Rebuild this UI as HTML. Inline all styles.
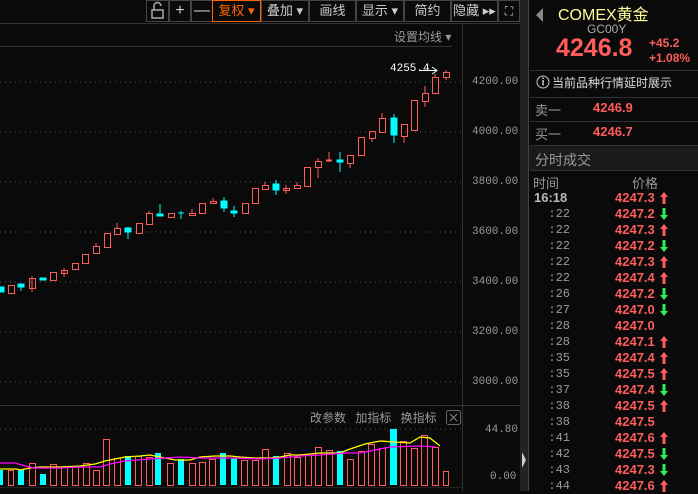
<!DOCTYPE html>
<html><head><meta charset="utf-8"><style>
*{margin:0;padding:0;box-sizing:border-box}
body{width:698px;height:491px;background:#0a0a0a;overflow:hidden;position:relative;font-family:"Liberation Sans","Noto Sans CJK SC",sans-serif;color:#ccc}
.a{position:absolute;white-space:nowrap}
.tb{position:absolute;top:0;height:22px;border:1px solid #444;font-size:13px;color:#ccc;text-align:center;line-height:20px}
.r{position:absolute;left:528px;width:170px;height:16px;font-size:12px;line-height:16px}
.t{position:absolute;right:128px;color:#999;font-family:"Liberation Mono",monospace;font-size:12px}
.p{position:absolute;left:87px;color:#ff5c5c;font-weight:bold;font-size:13px;font-family:"Liberation Sans",sans-serif}
.ar{position:absolute;left:132px;top:2px}
</style></head><body>
<svg class="a" style="left:0;top:0" width="698" height="491">
<line x1="0" y1="23.5" x2="520" y2="23.5" stroke="#333"/>
<line x1="0" y1="46.5" x2="452" y2="46.5" stroke="#333"/>
<line x1="462.5" y1="24" x2="462.5" y2="491" stroke="#333"/>
<line x1="0" y1="405.5" x2="520" y2="405.5" stroke="#333"/>
<line x1="0" y1="487.5" x2="462" y2="487.5" stroke="#222"/>
<rect x="520" y="0" width="8" height="491" fill="#222"/>
<line x1="528.5" y1="0" x2="528.5" y2="491" stroke="#444"/>
<polygon points="522,452 526,460 522,468" fill="#ccc"/>
<g stroke="#555" stroke-dasharray="1,4">
<line x1="0" y1="82" x2="462" y2="82"/><line x1="0" y1="132" x2="462" y2="132"/><line x1="0" y1="182" x2="462" y2="182"/><line x1="0" y1="232" x2="462" y2="232"/><line x1="0" y1="282" x2="462" y2="282"/><line x1="0" y1="332" x2="462" y2="332"/><line x1="0" y1="382" x2="462" y2="382"/><line x1="0" y1="429" x2="462" y2="429"/></g>
<g fill="#00ffff" stroke="#00ffff" stroke-width="1">
<rect x="-1" y="287" width="5" height="5"/>
<rect x="18" y="284" width="6" height="3"/><line x1="21" y1="284" x2="21" y2="291"/>
<rect x="40" y="278" width="6" height="2"/>
<rect x="125" y="228" width="6" height="4"/><line x1="128" y1="227" x2="128" y2="239"/>
<rect x="157" y="214" width="6" height="2"/><line x1="160" y1="204" x2="160" y2="216"/>
<line x1="178" y1="213" x2="184" y2="213"/><line x1="181" y1="211" x2="181" y2="219"/>
<rect x="221" y="201" width="6" height="7"/><line x1="224" y1="197" x2="224" y2="212"/>
<rect x="231" y="211" width="6" height="2"/><line x1="234" y1="206" x2="234" y2="217"/>
<rect x="273" y="184" width="6" height="6"/><line x1="276" y1="180" x2="276" y2="195"/>
<rect x="337" y="160" width="6" height="2"/><line x1="340" y1="152" x2="340" y2="172"/>
<rect x="391" y="118" width="6" height="17"/><line x1="394" y1="114" x2="394" y2="143"/>
</g>
<g fill="none" stroke="#ff5c5c" stroke-width="1">
<rect x="8.5" y="285.5" width="6" height="8"/>
<rect x="29.5" y="278.5" width="6" height="10"/><line x1="32" y1="276" x2="32" y2="292"/>
<rect x="50.5" y="272.5" width="6" height="8"/>
<rect x="61.5" y="270.5" width="6" height="3"/><line x1="64" y1="268" x2="64" y2="277"/>
<rect x="72.5" y="263.5" width="6" height="6"/>
<rect x="82.5" y="254.5" width="6" height="9"/>
<rect x="93.5" y="246.5" width="6" height="7"/><line x1="96" y1="243" x2="96" y2="246"/>
<rect x="104.5" y="233.5" width="6" height="14"/>
<rect x="114.5" y="228.5" width="6" height="6"/><line x1="117" y1="223" x2="117" y2="228"/>
<rect x="136.5" y="223.5" width="6" height="10"/>
<rect x="146.5" y="213.5" width="6" height="11"/><line x1="149" y1="211" x2="149" y2="213"/>
<rect x="168.5" y="213.5" width="6" height="4"/>
<rect x="189.5" y="213.5" width="6" height="2"/><line x1="192" y1="209" x2="192" y2="213"/>
<rect x="199.5" y="203.5" width="6" height="10"/>
<rect x="210.5" y="201.5" width="6" height="2"/><line x1="213" y1="198" x2="213" y2="201"/>
<rect x="242.5" y="203.5" width="6" height="10"/>
<rect x="252.5" y="188.5" width="6" height="15"/>
<rect x="262.5" y="185.5" width="6" height="4"/><line x1="265" y1="182" x2="265" y2="185"/>
<rect x="283.5" y="188.5" width="6" height="2"/><line x1="286" y1="185" x2="286" y2="194"/>
<rect x="294.5" y="185.5" width="6" height="3"/><line x1="297" y1="182" x2="297" y2="185"/>
<rect x="304.5" y="167.5" width="6" height="19"/>
<rect x="315.5" y="161.5" width="6" height="6"/><line x1="318" y1="158" x2="318" y2="161"/><line x1="318" y1="168" x2="318" y2="178"/>
<line x1="326" y1="160.5" x2="332" y2="160.5" stroke-width="2"/><line x1="329" y1="152" x2="329" y2="162"/>
<rect x="347.5" y="155.5" width="6" height="8"/><line x1="350" y1="163" x2="350" y2="168"/>
<rect x="358.5" y="137.5" width="6" height="18"/>
<rect x="369.5" y="131.5" width="6" height="7"/><line x1="372" y1="138" x2="372" y2="142"/>
<rect x="379.5" y="118.5" width="6" height="14"/><line x1="382" y1="113" x2="382" y2="118"/>
<rect x="401.5" y="124.5" width="6" height="12"/><line x1="404" y1="136" x2="404" y2="143"/>
<rect x="411.5" y="100.5" width="6" height="30"/>
<rect x="422.5" y="93.5" width="6" height="8"/><line x1="425" y1="86" x2="425" y2="93"/><line x1="425" y1="101" x2="425" y2="107"/>
<rect x="432.5" y="77.5" width="6" height="16"/><line x1="435" y1="74" x2="435" y2="77"/>
<rect x="443.5" y="72.5" width="6" height="5"/><line x1="446" y1="70" x2="446" y2="72"/><line x1="446" y1="78" x2="446" y2="80"/>
</g>
<line x1="419" y1="70.5" x2="437" y2="70.5" stroke="#fff"/><polyline points="432,67 437,70.5 432,74" fill="none" stroke="#fff"/>
<g fill="#00ffff">
<rect x="0" y="470" width="3" height="15"/><rect x="18" y="470" width="6" height="15"/><rect x="40" y="474" width="6" height="11"/><rect x="125" y="456" width="6" height="29"/><rect x="155" y="453" width="6" height="32"/><rect x="178" y="459" width="6" height="26"/><rect x="220" y="453" width="6" height="32"/><rect x="231" y="458" width="6" height="27"/><rect x="273" y="456" width="6" height="29"/><rect x="337" y="451" width="6" height="34"/><rect x="390" y="429" width="7" height="56"/>
</g>
<g fill="none" stroke="#ff5c5c">
<rect x="8.5" y="470.5" width="5" height="15"/><rect x="29.5" y="463.5" width="6" height="22"/><rect x="50.5" y="464.5" width="6" height="21"/><rect x="61.5" y="467.5" width="6" height="18"/><rect x="72.5" y="466.5" width="6" height="19"/><rect x="83.5" y="463.5" width="6" height="22"/><rect x="93.5" y="470.5" width="6" height="15"/><rect x="103.5" y="439.5" width="6" height="46"/><rect x="114.5" y="458.5" width="6" height="27"/><rect x="135.5" y="456.5" width="6" height="29"/><rect x="146.5" y="457.5" width="6" height="28"/><rect x="167.5" y="463.5" width="6" height="22"/><rect x="189.5" y="463.5" width="6" height="22"/><rect x="199.5" y="462.5" width="6" height="23"/><rect x="209.5" y="459.5" width="6" height="26"/><rect x="241.5" y="460.5" width="6" height="25"/><rect x="252.5" y="460.5" width="6" height="25"/><rect x="262.5" y="449.5" width="6" height="36"/><rect x="284.5" y="453.5" width="6" height="32"/><rect x="294.5" y="457.5" width="6" height="28"/><rect x="305.5" y="455.5" width="6" height="30"/><rect x="315.5" y="447.5" width="6" height="38"/><rect x="326.5" y="450.5" width="6" height="35"/><rect x="347.5" y="459.5" width="6" height="26"/><rect x="358.5" y="451.5" width="6" height="34"/><rect x="368.5" y="444.5" width="6" height="41"/><rect x="379.5" y="448.5" width="6" height="37"/><rect x="400.5" y="441.5" width="6" height="44"/><rect x="411.5" y="448.5" width="6" height="37"/><rect x="421.5" y="435.5" width="6" height="50"/><rect x="432.5" y="447.5" width="6" height="38"/><rect x="443.5" y="471.5" width="5" height="14"/>
</g>
<polyline fill="none" stroke="#ffff00" stroke-width="1.3" points="0,469 17,469 20,470 30,468 40,467 60,467 80,466 95,464 105,461 115,459 125,457 140,456 150,455 160,457 175,460 190,460 200,457 215,456 230,456 240,457 255,458 270,458 280,457 290,455 300,455 320,453 340,453 350,449 365,444 380,441 395,442 410,443 420,437 430,438 440,446"/>
<polyline fill="none" stroke="#ff00ff" stroke-width="1.3" points="0,463 15,463 25,466 35,468 60,468 80,467 100,467 110,464 125,461 150,459 165,458 180,457 200,458 230,458 260,459 280,458 300,456 320,455 345,453 360,453 390,447 420,446 436,447"/>
<rect x="446.5" y="410.5" width="14" height="14" fill="none" stroke="#666" rx="2"/>
<path d="M450 414 L457 421 M457 414 L450 421" stroke="#888"/>
<line x1="530" y1="70.5" x2="698" y2="70.5" stroke="#333"/>
<line x1="530" y1="97.5" x2="698" y2="97.5" stroke="#333"/>
<line x1="530" y1="121.5" x2="698" y2="121.5" stroke="#333"/>
<line x1="530" y1="145.5" x2="698" y2="145.5" stroke="#333"/>
<rect x="529" y="146" width="169" height="24" fill="#1a1a1a"/>
<line x1="530" y1="170.5" x2="698" y2="170.5" stroke="#333"/>
<polygon points="543,8 543,22 536,15" fill="#888"/>
<circle cx="543" cy="82" r="6" fill="none" stroke="#ccc"/>
<rect x="542.3" y="80" width="1.5" height="5.5" fill="#ccc"/><rect x="542.3" y="77.5" width="1.5" height="1.5" fill="#ccc"/>
</svg>
<div class="tb" style="left:146px;width:23px">
<svg width="21" height="20"><rect x="5" y="9" width="11" height="8" fill="none" stroke="#aaa" stroke-width="1.5"/><path d="M7 9 V5 a3.5 3.5 0 0 1 7 0" fill="none" stroke="#aaa" stroke-width="1.5"/></svg></div>
<div class="tb" style="left:169px;width:22px;font-size:16px">+</div>
<div class="tb" style="left:191px;width:22px;font-size:16px">—</div>
<div class="tb" style="left:212px;width:49px;border-color:#ff6600;color:#ff6600">复权 ▾</div>
<div class="tb" style="left:261px;width:48px">叠加 ▾</div>
<div class="tb" style="left:309px;width:47px">画线</div>
<div class="tb" style="left:356px;width:48px">显示 ▾</div>
<div class="tb" style="left:404px;width:47px">简约</div>
<div class="tb" style="left:451px;width:47px">隐藏 ▸▸</div>
<div class="tb" style="left:498px;width:22px;font-size:12px">⛶</div>
<div class="a" style="left:394px;top:28px;font-size:12px;color:#999">设置均线 ▾</div>
<div class="a" style="left:390px;top:63px;font-size:11px;color:#fff;font-family:'Liberation Mono',monospace">4255.4</div>
<div class="a" style="left:472px;top:0;width:46px;font-size:11px;color:#999;font-family:'Liberation Mono',monospace;line-height:14px">
<div style="position:absolute;top:75px">4200.00</div><div style="position:absolute;top:125px">4000.00</div><div style="position:absolute;top:175px">3800.00</div><div style="position:absolute;top:225px">3600.00</div><div style="position:absolute;top:275px">3400.00</div><div style="position:absolute;top:325px">3200.00</div><div style="position:absolute;top:375px">3000.00</div><div style="position:absolute;top:423px;left:13px">44.80</div><div style="position:absolute;top:470px;left:18px">0.00</div></div>
<div class="a" style="left:310px;top:409px;font-size:12px;color:#999;word-spacing:6px">改参数 加指标 换指标</div>
<div class="a" style="left:558px;top:1px;font-size:16px;color:#ffff99">COMEX黄金</div>
<div class="a" style="left:587px;top:22px;font-size:12px;color:#aaa">GC00Y</div>
<div class="a" style="left:556px;top:34px;font-size:25px;font-weight:bold;color:#ff5c5c">4246.8</div>
<div class="a" style="left:649px;top:36px;font-size:12px;font-weight:bold;color:#ff5c5c;line-height:15px">+45.2<br>+1.08%</div>
<div class="a" style="left:552px;top:74px;font-size:12px;color:#ddd">当前品种行情延时展示</div>
<div class="a" style="left:535px;top:100px;font-size:13px;color:#999">卖一</div>
<div class="a" style="left:593px;top:100px;font-size:13px;font-weight:bold;color:#ff5c5c">4246.9</div>
<div class="a" style="left:535px;top:124px;font-size:13px;color:#999">买一</div>
<div class="a" style="left:593px;top:124px;font-size:13px;font-weight:bold;color:#ff5c5c">4246.7</div>
<div class="a" style="left:535px;top:150px;font-size:14px;color:#999">分时成交</div>
<div class="a" style="left:533px;top:173px;font-size:13px;color:#999">时间</div>
<div class="a" style="left:632px;top:173px;font-size:13px;color:#999">价格</div>
<div class="r" style="top:190px"><span class="t" style="left:6px;right:auto;font-size:13px;font-weight:bold;color:#bbb;font-family:'Liberation Sans',sans-serif">16:18</span><span class="p">4247.3</span><svg class="ar" width="8" height="12"><path d="M4 0 L8 5 H5.5 V12 H2.5 V5 H0Z" fill="#ff5c5c"/></svg></div>
<div class="r" style="top:206px"><span class="t">:22</span><span class="p">4247.2</span><svg class="ar" width="8" height="12"><path d="M4 12 L8 7 H5.5 V0 H2.5 V7 H0Z" fill="#33ee55"/></svg></div>
<div class="r" style="top:222px"><span class="t">:22</span><span class="p">4247.3</span><svg class="ar" width="8" height="12"><path d="M4 0 L8 5 H5.5 V12 H2.5 V5 H0Z" fill="#ff5c5c"/></svg></div>
<div class="r" style="top:238px"><span class="t">:22</span><span class="p">4247.2</span><svg class="ar" width="8" height="12"><path d="M4 12 L8 7 H5.5 V0 H2.5 V7 H0Z" fill="#33ee55"/></svg></div>
<div class="r" style="top:254px"><span class="t">:22</span><span class="p">4247.3</span><svg class="ar" width="8" height="12"><path d="M4 0 L8 5 H5.5 V12 H2.5 V5 H0Z" fill="#ff5c5c"/></svg></div>
<div class="r" style="top:270px"><span class="t">:22</span><span class="p">4247.4</span><svg class="ar" width="8" height="12"><path d="M4 0 L8 5 H5.5 V12 H2.5 V5 H0Z" fill="#ff5c5c"/></svg></div>
<div class="r" style="top:286px"><span class="t">:26</span><span class="p">4247.2</span><svg class="ar" width="8" height="12"><path d="M4 12 L8 7 H5.5 V0 H2.5 V7 H0Z" fill="#33ee55"/></svg></div>
<div class="r" style="top:302px"><span class="t">:27</span><span class="p">4247.0</span><svg class="ar" width="8" height="12"><path d="M4 12 L8 7 H5.5 V0 H2.5 V7 H0Z" fill="#33ee55"/></svg></div>
<div class="r" style="top:318px"><span class="t">:28</span><span class="p">4247.0</span></div>
<div class="r" style="top:334px"><span class="t">:28</span><span class="p">4247.1</span><svg class="ar" width="8" height="12"><path d="M4 0 L8 5 H5.5 V12 H2.5 V5 H0Z" fill="#ff5c5c"/></svg></div>
<div class="r" style="top:350px"><span class="t">:35</span><span class="p">4247.4</span><svg class="ar" width="8" height="12"><path d="M4 0 L8 5 H5.5 V12 H2.5 V5 H0Z" fill="#ff5c5c"/></svg></div>
<div class="r" style="top:366px"><span class="t">:35</span><span class="p">4247.5</span><svg class="ar" width="8" height="12"><path d="M4 0 L8 5 H5.5 V12 H2.5 V5 H0Z" fill="#ff5c5c"/></svg></div>
<div class="r" style="top:382px"><span class="t">:37</span><span class="p">4247.4</span><svg class="ar" width="8" height="12"><path d="M4 12 L8 7 H5.5 V0 H2.5 V7 H0Z" fill="#33ee55"/></svg></div>
<div class="r" style="top:398px"><span class="t">:38</span><span class="p">4247.5</span><svg class="ar" width="8" height="12"><path d="M4 0 L8 5 H5.5 V12 H2.5 V5 H0Z" fill="#ff5c5c"/></svg></div>
<div class="r" style="top:414px"><span class="t">:38</span><span class="p">4247.5</span></div>
<div class="r" style="top:430px"><span class="t">:41</span><span class="p">4247.6</span><svg class="ar" width="8" height="12"><path d="M4 0 L8 5 H5.5 V12 H2.5 V5 H0Z" fill="#ff5c5c"/></svg></div>
<div class="r" style="top:446px"><span class="t">:42</span><span class="p">4247.5</span><svg class="ar" width="8" height="12"><path d="M4 12 L8 7 H5.5 V0 H2.5 V7 H0Z" fill="#33ee55"/></svg></div>
<div class="r" style="top:462px"><span class="t">:43</span><span class="p">4247.3</span><svg class="ar" width="8" height="12"><path d="M4 12 L8 7 H5.5 V0 H2.5 V7 H0Z" fill="#33ee55"/></svg></div>
<div class="r" style="top:478px"><span class="t">:44</span><span class="p">4247.6</span><svg class="ar" width="8" height="12"><path d="M4 0 L8 5 H5.5 V12 H2.5 V5 H0Z" fill="#ff5c5c"/></svg></div>
</body></html>
